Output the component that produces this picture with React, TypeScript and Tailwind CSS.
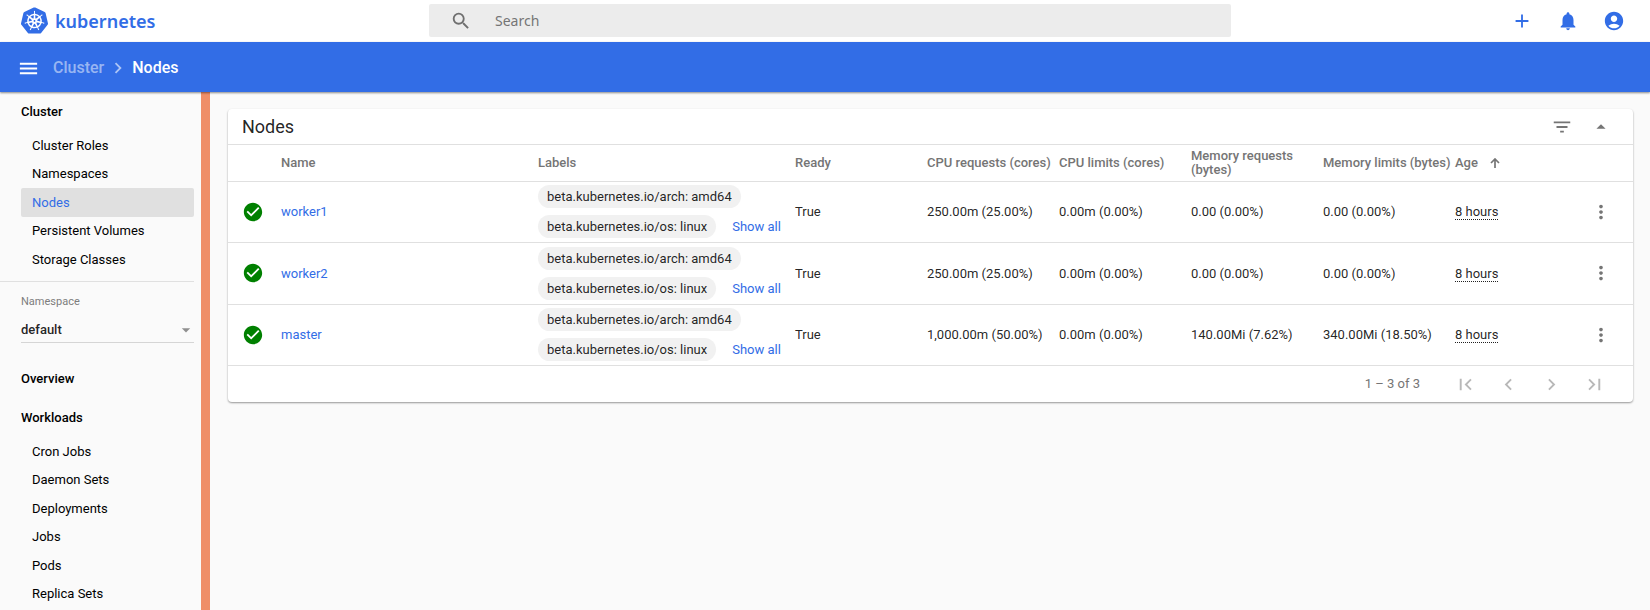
import { ReactNode } from "react";
import {
    MdAccountCircle,
    MdAdd,
    MdArrowDropDown,
    MdArrowDropUp,
    MdCheckCircle,
    MdChevronLeft,
    MdChevronRight,
    MdFilterList,
    MdFirstPage,
    MdLastPage,
    MdMenu,
    MdMoreVert,
    MdNotifications,
    MdSearch,
} from "react-icons/md";
import { SiKubernetes } from "react-icons/si";

const clusterItems = ["Cluster Roles", "Namespaces", "Nodes", "Persistent Volumes", "Storage Classes"];
const workloadItems = ["Cron Jobs", "Daemon Sets", "Deployments", "Jobs", "Pods", "Replica Sets"];

const labels = ["beta.kubernetes.io/arch: amd64", "beta.kubernetes.io/os: linux"];

const nodes = [
    { name: "worker1", cpuRequests: "250.00m (25.00%)", cpuLimits: "0.00m (0.00%)", memRequests: "0.00 (0.00%)", memLimits: "0.00 (0.00%)" },
    { name: "worker2", cpuRequests: "250.00m (25.00%)", cpuLimits: "0.00m (0.00%)", memRequests: "0.00 (0.00%)", memLimits: "0.00 (0.00%)" },
    { name: "master", cpuRequests: "1,000.00m (50.00%)", cpuLimits: "0.00m (0.00%)", memRequests: "140.00Mi (7.62%)", memLimits: "340.00Mi (18.50%)" },
];

function IconButton({ label, children }: { label: string; children: ReactNode }) {
    return <button type="button" aria-label={label} className="flex items-center justify-center">{children}</button>
}

function TopBar() {
    return <header className="flex h-[42px] shrink-0 items-center bg-white pb-px">
        <a href="#" className="flex w-[26%] items-center gap-[7px] pl-[21px] text-[#326de6]">
            <SiKubernetes size={27} />
            <span className="font-['Noto_Sans',sans-serif] text-[18px] leading-6 font-semibold">kubernetes</span>
        </a>
        <label className="flex h-[33px] w-[48.6%] items-center gap-[23px] rounded-xs bg-[#ececec] pl-[21px] text-[#6f6f6f]">
            <MdSearch size={22} />
            <input
                type="text"
                placeholder="Search"
                aria-label="Search"
                className="flex-1 bg-transparent font-['Noto_Sans',sans-serif] text-[14px] outline-none placeholder:text-[#757575]"
            />
        </label>
        <div className="flex flex-1 justify-end gap-6 pr-[25px] text-[#326de6]">
            <IconButton label="Create new resource"><MdAdd size={22} /></IconButton>
            <IconButton label="Notifications"><MdNotifications size={22} /></IconButton>
            <IconButton label="Account"><MdAccountCircle size={22} /></IconButton>
        </div>
    </header>
}

function Breadcrumbs() {
    return <div className="z-10 flex h-[50px] shrink-0 items-center bg-[#326de6] pt-[2px] pl-[17px] text-[16px] font-medium text-white shadow-[0_1px_2px_rgba(0,0,0,0.45)]">
        <IconButton label="Toggle menu"><MdMenu size={23} /></IconButton>
        <nav className="flex items-center pl-[13px]">
            <a href="#" className="text-white/50">Cluster</a>
            <MdChevronRight size={22} className="mx-[3px] text-white/60" />
            <span>Nodes</span>
        </nav>
    </div>
}

function NavHeading({ children }: { children: ReactNode }) {
    return <a href="#" className="flex h-[39px] items-center pl-[21px] font-medium text-black">{children}</a>
}

function NavList({ items, active, className }: { items: string[]; active?: string; className: string }) {
    return <ul className={["grid auto-rows-fr pl-[21px]", className].join(" ")}>
        {items.map((item) => (
            <li key={item} className="flex">
                <a
                    href="#"
                    className={item === active
                        ? "flex flex-1 items-center rounded-xs bg-[#e0e0e0] pl-[11px] text-[#326de6]"
                        : "flex flex-1 items-center pl-[11px] text-black"}
                >
                    {item}
                </a>
            </li>
        ))}
    </ul>
}

function SideBar() {
    return <aside className="w-[210px] shrink-0 overflow-hidden border-r-9 border-[#ef8e68] pr-[7px]">
        <NavHeading>Cluster</NavHeading>
        <NavList items={clusterItems} active="Nodes" className="min-h-[143px]" />
        <div className="mt-[7px] border-t border-[#e0e0e0] pt-3 pb-4 pl-[21px]">
            <label htmlFor="namespace" className="block text-[11px] leading-4 text-[#7d7d7d]">Namespace</label>
            <div className="relative mt-2 border-b border-[#d5d5d5]">
                <select id="namespace" defaultValue="default" className="block h-6 w-full appearance-none bg-transparent font-medium text-black/87">
                    <option value="default">default</option>
                </select>
                <MdArrowDropDown size={20} className="pointer-events-none absolute top-[2px] -right-[2px] text-[#8f8f8f]" />
            </div>
        </div>
        <NavHeading>Overview</NavHeading>
        <NavHeading>Workloads</NavHeading>
        <NavList items={workloadItems} className="min-h-[171px]" />
    </aside>
}

function NodesTable() {
    return <table className="h-[221px] w-full table-fixed border-collapse text-left">
        <colgroup>
            <col className="w-[53px]" />
            <col />
            <col />
            <col className="w-[132px]" />
            <col className="w-[132px]" />
            <col className="w-[132px]" />
            <col className="w-[132px]" />
            <col className="w-[132px]" />
            <col className="w-[132px]" />
            <col className="w-[46px]" />
        </colgroup>
        <thead className="text-[#757575]">
            <tr className="h-9 border-b border-[#e0e0e0] leading-[14px] *:font-medium">
                <th aria-label="Status" />
                <th>Name</th>
                <th>Labels</th>
                <th>Ready</th>
                <th>CPU requests (cores)</th>
                <th>CPU limits (cores)</th>
                <th>Memory requests (bytes)</th>
                <th>Memory limits (bytes)</th>
                <th aria-sort="ascending">
                    <button type="button" className="flex items-center gap-3">
                        Age
                        <svg width="10" height="10" viewBox="0 0 10 10" fill="none" stroke="currentColor" strokeWidth="1.7">
                            <path d="M5 10V1.2M1 5L5 1L9 5" />
                        </svg>
                    </button>
                </th>
                <th aria-label="Actions" />
            </tr>
        </thead>
        <tbody>
            {nodes.map((node) => (
                <tr key={node.name} className="border-b border-[#e0e0e0]">
                    <td className="pl-[14px]"><MdCheckCircle size={22} className="text-[#008000]" /></td>
                    <td><a href="#" className="text-[#326de6]">{node.name}</a></td>
                    <td>
                        <div className="flex flex-wrap items-center gap-x-4 gap-y-[7px]">
                            {labels.map((label) => (
                                <span key={label} className="flex h-[23px] items-center rounded-full bg-[#f1f1f1] px-[9px]">{label}</span>
                            ))}
                            <button type="button" className="text-[#326de6]">Show all</button>
                        </div>
                    </td>
                    <td>True</td>
                    <td>{node.cpuRequests}</td>
                    <td>{node.cpuLimits}</td>
                    <td>{node.memRequests}</td>
                    <td>{node.memLimits}</td>
                    <td><span className="border-b border-dotted border-black/87 leading-[14px]">8 hours</span></td>
                    <td className="pl-[3px] text-[#757575]">
                        <IconButton label={`Actions for ${node.name}`}><MdMoreVert size={22} /></IconButton>
                    </td>
                </tr>
            ))}
        </tbody>
    </table>
}

function NodesCard() {
    return <section className="rounded-sm bg-white shadow-[0_1px_2px_rgba(0,0,0,0.4)]">
        <div className="flex h-9 items-center justify-between border-b border-[#e0e0e0] pr-[21px] pl-[14px]">
            <h1 className="text-[18px] leading-6">Nodes</h1>
            <div className="flex gap-[17px] text-[#757575]">
                <IconButton label="Filter"><MdFilterList size={22} /></IconButton>
                <IconButton label="Collapse"><MdArrowDropUp size={22} /></IconButton>
            </div>
        </div>
        <NodesTable />
        <div className="flex h-9 items-center justify-end pr-[27px] text-[#757575]">
            <span className="pr-[34px]">1 – 3 of 3</span>
            <div className="flex gap-5 text-[#b8b8b8]">
                <IconButton label="First page"><MdFirstPage size={23} /></IconButton>
                <IconButton label="Previous page"><MdChevronLeft size={23} /></IconButton>
                <IconButton label="Next page"><MdChevronRight size={23} /></IconButton>
                <IconButton label="Last page"><MdLastPage size={23} /></IconButton>
            </div>
        </div>
    </section>
}

export default function App() {
    return <div className="flex h-screen flex-col bg-[#fafafa] font-[Roboto,sans-serif] text-[13px] text-black/87">
        <TopBar />
        <Breadcrumbs />
        <div className="flex min-h-0 flex-1">
            <SideBar />
            <main className="min-w-0 flex-1 overflow-auto pt-[17px] pr-[17px] pb-4 pl-[18px]">
                <NodesCard />
            </main>
        </div>
    </div>
}
